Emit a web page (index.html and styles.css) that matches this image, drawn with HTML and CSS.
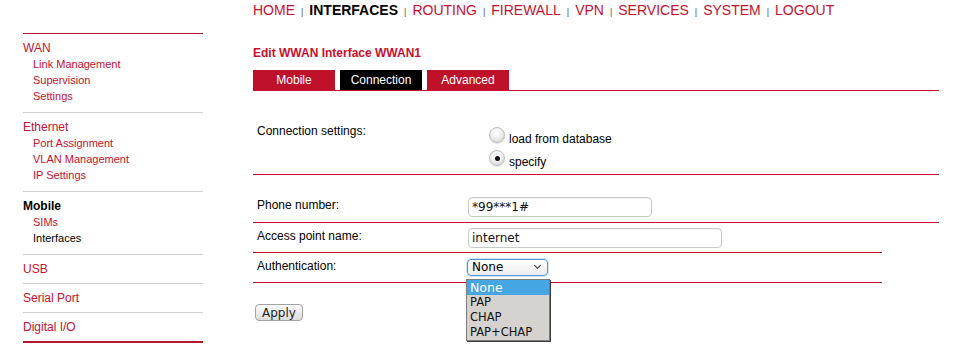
FILE: index.html
```html
<!DOCTYPE html>
<html>
<head>
	<title>Edit WWAN Interface</title>
	<meta charset="utf-8">
	<link rel="stylesheet" href="styles.css">
</head>
<body>
	<div class="page">
		<!--Side menu-->
		<div class="sidebar">
			<div class="group">
				<a class="head" href="#">WAN</a>
				<a class="sub" href="#">Link Management</a>
				<a class="sub" href="#">Supervision</a>
				<a class="sub" href="#">Settings</a>
			</div>
			<div class="group">
				<a class="head" href="#">Ethernet</a>
				<a class="sub" href="#">Port Assignment</a>
				<a class="sub" href="#">VLAN Management</a>
				<a class="sub" href="#">IP Settings</a>
			</div>
			<div class="group">
				<a class="head current" href="#">Mobile</a>
				<a class="sub" href="#">SIMs</a>
				<a class="sub current" href="#">Interfaces</a>
			</div>
			<div class="group single">
				<a class="head" href="#">USB</a>
			</div>
			<div class="group single">
				<a class="head" href="#">Serial Port</a>
			</div>
			<div class="group single last">
				<a class="head" href="#">Digital I/O</a>
			</div>
		</div>

		<!--Main content-->
		<div class="main">
			<div class="topnav">
				<a href="#">HOME</a><span class="sep">|</span>
				<a href="#" class="active">INTERFACES</a><span class="sep">|</span>
				<a href="#">ROUTING</a><span class="sep">|</span>
				<a href="#">FIREWALL</a><span class="sep">|</span>
				<a href="#">VPN</a><span class="sep">|</span>
				<a href="#">SERVICES</a><span class="sep">|</span>
				<a href="#">SYSTEM</a><span class="sep">|</span>
				<a href="#">LOGOUT</a>
			</div>

			<h1 class="title">Edit WWAN Interface WWAN1</h1>

			<div class="tabs">
				<a class="tab" href="#">Mobile</a>
				<a class="tab active" href="#">Connection</a>
				<a class="tab" href="#">Advanced</a>
			</div>

			<form>
				<div class="row conn">
					<div class="label wide">Connection settings:</div>
					<div class="options">
						<label class="option"><input type="radio" name="conn"><span>load from database</span></label>
						<label class="option"><input type="radio" name="conn" checked><span>specify</span></label>
					</div>
				</div>
				<div class="row phone">
					<div class="label">Phone number:</div>
					<input class="text short" type="text" value="*99***1#">
				</div>
				<div class="row apn narrow">
					<div class="label">Access point name:</div>
					<input class="text long" type="text" value="internet">
				</div>
				<div class="row auth narrow">
					<div class="label">Authentication:</div>
					<div class="selectwrap">
						<div class="select">None</div>
						<!--open drop-down list-->
						<ul class="optlist">
							<li class="hl">None</li>
							<li>PAP</li>
							<li>CHAP</li>
							<li>PAP+CHAP</li>
						</ul>
					</div>
				</div>
				<button type="button" class="apply">Apply</button>
			</form>
		</div>
	</div>
</body>
</html>
```

FILE: styles.css
```css
body{
	margin: 0;
	font-family: "Liberation Sans", Arial, sans-serif;
	background: #fff;
	color: #000;
}

a{
	text-decoration: none;
	color: #c8102e;
}

.page{
	display: flex;
	padding-left: 23px;
}

/* side menu */
.sidebar{
	width: 180px;
	margin-top: 33px;
	border-top: 1px solid #b5172f;
	flex-shrink: 0;
}

.group{
	display: flex;
	flex-direction: column;
	padding: 6px 0 8px;
	border-bottom: 1px solid #cfcfcf;
	line-height: 16px;
}

.group.single{
	padding: 6px 0 6px;
}

.group.last{
	border-bottom: 2px solid #b5172f;
}

.head{
	font-size: 12px;
}

.sub{
	font-size: 11px;
	padding-left: 10px;
}

.head.current{
	color: #000;
	font-weight: bold;
}

.sub.current{
	color: #000;
}

/* main column */
.main{
	margin-left: 50px;
	width: 686px;
	position: relative;
}

.topnav{
	display: flex;
	align-items: baseline;
	gap: 6px;
	padding-top: 1px;
	font-size: 14px;
	line-height: 18px;
}

.topnav a.active{
	color: #000;
	font-weight: bold;
}

.sep{
	font-size: 9px;
	color: #555;
}

.title{
	margin: 24px 0 0;
	font-size: 12px;
	line-height: 16px;
	color: #c8102e;
}

.tabs{
	display: flex;
	gap: 5px;
	margin-top: 9px;
	border-bottom: 1px solid #c8102e;
}

.tab{
	width: 82px;
	height: 20px;
	line-height: 20px;
	text-align: center;
	font-size: 12px;
	color: #fff;
	background: #c0112a;
}

.tab.active{
	background: #000;
}

/* form rows */
.row{
	display: flex;
	align-items: flex-start;
	border-bottom: 1px solid #c8102e;
	font-size: 12px;
	line-height: 16px;
}

.row.narrow{
	width: 629px;
}

.label{
	width: 211px;
	padding-left: 4px;
	flex-shrink: 0;
}

.label.wide{
	width: 232px;
	padding-top: 32px;
}

.conn{
	padding-bottom: 3px;
}

.options{
	display: flex;
	flex-direction: column;
	gap: 2px;
	padding-top: 36px;
}

.option{
	display: flex;
	align-items: flex-start;
	height: 21px;
}

.option span{
	padding-top: 4px;
	padding-left: 4px;
}

.option input{
	appearance: none;
	margin: 0;
	width: 16px;
	height: 16px;
	border-radius: 50%;
	border: 1px solid #bdbdbd;
	background: radial-gradient(circle at 45% 35%, #ffffff 0%, #f1f1f1 40%, #d2d2d2 100%);
	box-shadow: 0 1px 1px rgba(0,0,0,0.12);
	position: relative;
}

.option input:checked::after{
	content: "";
	position: absolute;
	left: 5px;
	top: 5px;
	width: 5px;
	height: 5px;
	border-radius: 50%;
	background: #111;
}

.phone{
	padding: 22px 0 5px;
}

.apn{
	padding: 5px 0 4px;
}

.auth{
	padding: 6px 0 6px;
}

.auth .label{
	margin-top: -1px;
}

.text{
	box-sizing: border-box;
	height: 20px;
	margin: 0;
	padding: 0 3px;
	border: 1px solid #cacaca;
	border-radius: 4px;
	box-shadow: inset 0 1px 1px rgba(0,0,0,0.06);
	font-family: "DejaVu Sans", sans-serif;
	font-size: 12px;
	color: #111;
	background: #fff;
}

.text.short{
	width: 184px;
}

.text.long{
	width: 254px;
}

.selectwrap{
	position: relative;
	margin-left: -1px;
}

.select{
	box-sizing: border-box;
	width: 81px;
	height: 17px;
	line-height: 15px;
	padding-left: 4px;
	border: 1px solid #4f98d6;
	border-radius: 4px;
	background: linear-gradient(#ffffff, #ececec);
	box-shadow: 0 0 0 1px rgba(79,152,214,0.25);
	font-family: "DejaVu Sans", sans-serif;
	font-size: 12px;
	position: relative;
}

.select::after{
	content: "";
	position: absolute;
	right: 7px;
	top: 3px;
	width: 4px;
	height: 4px;
	border-right: 1.5px solid #333;
	border-bottom: 1.5px solid #333;
	transform: rotate(45deg);
}

.optlist{
	position: absolute;
	left: -1px;
	top: 20px;
	width: 82px;
	margin: 0;
	padding: 0;
	list-style: none;
	background: #d6d2d0;
	border: 1px solid #7c7c7c;
	box-shadow: 1px 1px 0 #3a3a3a;
	font-family: "DejaVu Sans", sans-serif;
	font-size: 11.5px;
	line-height: 15px;
	z-index: 2;
}

.optlist li{
	padding-left: 3px;
	color: #111;
}

.optlist li.hl{
	background: #45a6e3;
	color: #fff;
	font-size: 12.5px;
}

.apply{
	display: block;
	margin: 21px 0 0 2px;
	width: 48px;
	height: 17px;
	padding: 0;
	border: 1px solid #a3a3a3;
	border-radius: 4px;
	background: linear-gradient(#fbfbfb, #dcdcdc);
	font-family: "DejaVu Sans", sans-serif;
	font-size: 12px;
	line-height: 14px;
	color: #222;
}
```
